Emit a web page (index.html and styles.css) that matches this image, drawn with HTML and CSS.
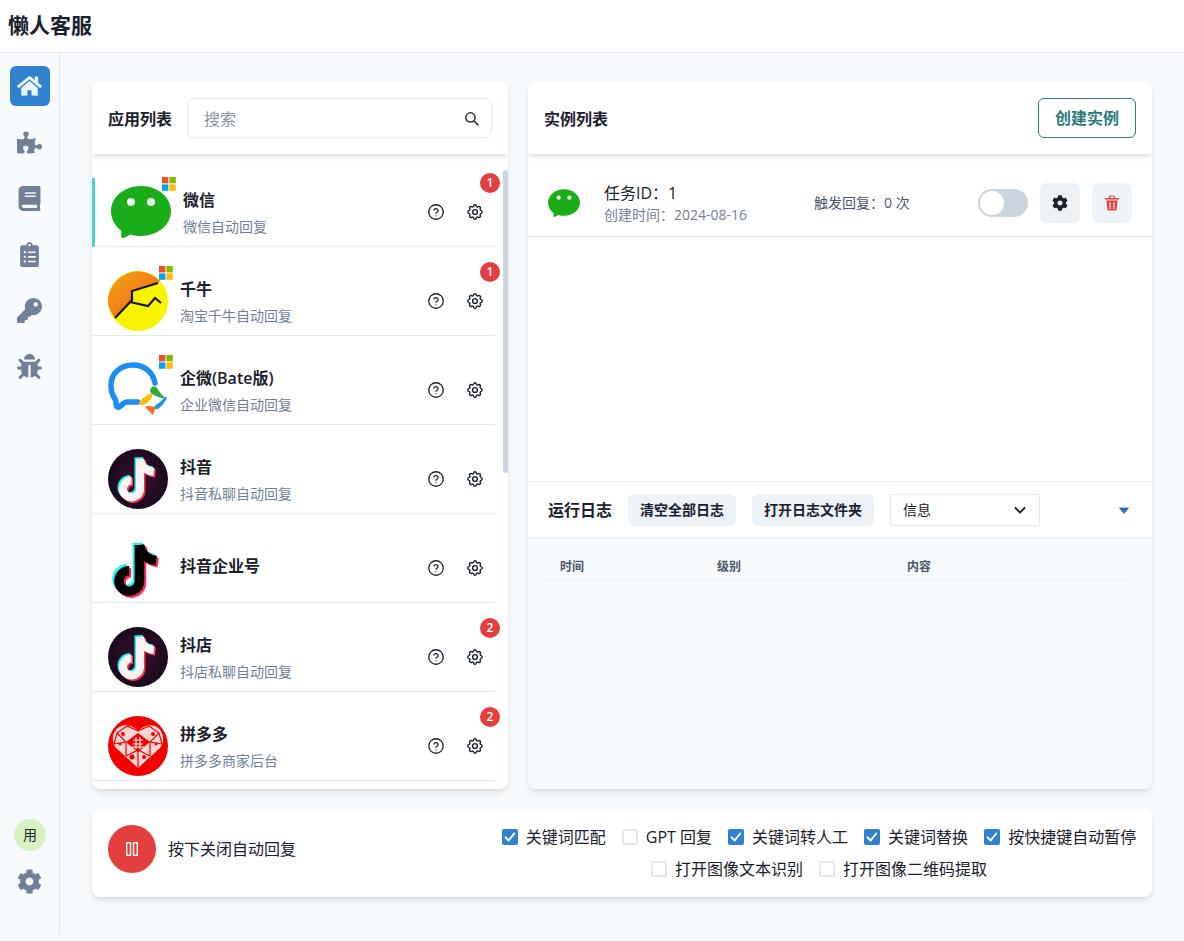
FILE: index.html
```html
<!DOCTYPE html>
<html lang="zh-CN">
<head>
<meta charset="utf-8">
<title>懒人客服</title>
<link rel="stylesheet" href="styles.css">
</head>
<body>
<svg class="defs" width="0" height="0" aria-hidden="true">
  <defs>
    <symbol id="i-home" viewBox="0 0 576 512"><path d="M280.37 148.26L96 300.11V464a16 16 0 0 0 16 16l112.06-.29a16 16 0 0 0 15.92-16V368a16 16 0 0 1 16-16h64a16 16 0 0 1 16 16v95.64a16 16 0 0 0 16 16.05L464 480a16 16 0 0 0 16-16V300L295.67 148.26a12.19 12.19 0 0 0-15.3 0zM571.6 251.47L488 182.56V44.05a12 12 0 0 0-12-12h-56a12 12 0 0 0-12 12v72.61L318.47 43a48 48 0 0 0-61 0L4.34 251.47a12 12 0 0 0-1.6 16.9l25.5 31A12 12 0 0 0 45.15 301l235.22-193.74a12.19 12.19 0 0 1 15.3 0L530.9 301a12 12 0 0 0 16.9-1.6l25.5-31a12 12 0 0 0-1.7-16.93z"/></symbol>
    <symbol id="i-puzzle" viewBox="0 0 576 512"><path d="M519.442 288.651c-41.519 0-59.5 31.593-82.058 31.593C377.409 320.244 432 144 432 144s-196.288 80-196.288-3.297c0-35.827 36.288-46.25 36.288-85.985C272 19.216 243.885 0 210.539 0c-34.654 0-66.366 18.891-66.366 56.346 0 41.364 31.711 59.277 31.711 81.75C175.885 207.719 0 166.758 0 166.758v333.237s178.635 41.047 178.635-28.662c0-22.473-40-40.107-40-81.471 0-37.456 29.25-56.346 63.577-56.346 33.673 0 61.788 19.216 61.788 54.717 0 39.735-36.288 50.158-36.288 85.985 0 60.803 129.675 25.73 181.23 25.73 0 0-34.725-120.101 25.827-120.101 35.962 0 46.423 36.152 86.308 36.152C556.712 416 576 387.99 576 354.443c0-34.199-18.962-65.792-56.558-65.792z"/></symbol>
    <symbol id="i-book" viewBox="0 0 448 512"><path d="M448 360V24c0-13.3-10.7-24-24-24H96C43 0 0 43 0 96v320c0 53 43 96 96 96h328c13.3 0 24-10.7 24-24v-16c0-7.5-3.5-14.3-8.9-18.7-4.2-15.4-4.2-59.3 0-74.7 5.4-4.3 8.9-11.1 8.9-18.6zM128 134c0-3.3 2.7-6 6-6h212c3.3 0 6 2.7 6 6v20c0 3.3-2.7 6-6 6H134c-3.3 0-6-2.7-6-6v-20zm0 64c0-3.3 2.7-6 6-6h212c3.3 0 6 2.7 6 6v20c0 3.3-2.7 6-6 6H134c-3.3 0-6-2.7-6-6v-20zm253.4 250H96c-17.7 0-32-14.3-32-32 0-17.6 14.4-32 32-32h285.4c-1.9 17.1-1.9 46.9 0 64z"/></symbol>
    <symbol id="i-clip" viewBox="0 0 384 512"><path d="M336 64h-80c0-35.3-28.7-64-64-64s-64 28.7-64 64H48C21.5 64 0 85.5 0 112v352c0 26.5 21.5 48 48 48h288c26.5 0 48-21.5 48-48V112c0-26.5-21.5-48-48-48zM96 424c-13.3 0-24-10.7-24-24s10.7-24 24-24 24 10.7 24 24-10.7 24-24 24zm0-96c-13.3 0-24-10.7-24-24s10.7-24 24-24 24 10.7 24 24-10.7 24-24 24zm0-96c-13.3 0-24-10.7-24-24s10.7-24 24-24 24 10.7 24 24-10.7 24-24 24zm96-192c13.3 0 24 10.7 24 24s-10.7 24-24 24-24-10.7-24-24 10.7-24 24-24zm128 368c0 4.4-3.6 8-8 8H168c-4.4 0-8-3.6-8-8v-16c0-4.4 3.6-8 8-8h144c4.4 0 8 3.6 8 8v16zm0-96c0 4.4-3.6 8-8 8H168c-4.4 0-8-3.6-8-8v-16c0-4.4 3.6-8 8-8h144c4.4 0 8 3.6 8 8v16zm0-96c0 4.4-3.6 8-8 8H168c-4.4 0-8-3.6-8-8v-16c0-4.4 3.6-8 8-8h144c4.4 0 8 3.6 8 8v16z"/></symbol>
    <symbol id="i-key" viewBox="0 0 512 512"><path d="M512 176.001C512 273.203 433.202 352 336 352c-11.22 0-22.19-1.062-32.827-3.069l-24.012 27.014A23.999 23.999 0 0 1 261.223 384H224v40c0 13.255-10.745 24-24 24h-40v40c0 13.255-10.745 24-24 24H24c-13.255 0-24-10.745-24-24v-78.059c0-6.365 2.529-12.47 7.029-16.971l161.802-161.802C163.108 213.814 160 195.271 160 176 160 78.798 238.797.001 335.999 0 433.488-.001 512 78.511 512 176.001zM336 128c0 26.51 21.49 48 48 48s48-21.49 48-48-21.49-48-48-48-48 21.49-48 48z"/></symbol>
    <symbol id="i-bug" viewBox="0 0 512 512"><path d="M511.988 288.9c-.478 17.43-15.217 31.1-32.653 31.1H424v16c0 21.864-4.882 42.584-13.6 61.145l60.228 60.228c12.496 12.497 12.496 32.758 0 45.255-12.498 12.497-32.759 12.496-45.256 0l-54.736-54.736C345.886 467.965 314.351 480 280 480V236c0-6.627-5.373-12-12-12h-24c-6.627 0-12 5.373-12 12v244c-34.351 0-65.886-12.035-90.636-32.108l-54.736 54.736c-12.498 12.497-32.759 12.496-45.256 0-12.496-12.497-12.496-32.758 0-45.255l60.228-60.228C92.882 378.584 88 357.864 88 336v-16H32.666C15.23 320 .491 306.33.013 288.9-.484 270.816 14.028 256 32 256h56v-58.745l-46.628-46.628c-12.496-12.497-12.496-32.758 0-45.255 12.498-12.497 32.758-12.497 45.256 0L141.255 160h229.489l54.627-54.627c12.498-12.497 32.758-12.497 45.256 0 12.496 12.497 12.496 32.758 0 45.255L424 197.255V256h55.989c17.972 0 32.484 14.816 31.999 32.9zM257 0c-61.856 0-112 50.144-112 112h224C369 50.144 318.856 0 257 0z"/></symbol>
    <symbol id="i-cog" viewBox="0 0 512 512"><path d="M487.4 315.7l-42.6-24.6c4.3-23.2 4.3-47 0-70.2l42.6-24.6c4.9-2.8 7.1-8.6 5.5-14-11.1-35.6-30-67.8-54.7-94.6-3.8-4.1-10-5.1-14.8-2.3L380.8 110c-17.9-15.4-38.5-27.3-60.8-35.1V25.8c0-5.6-3.9-10.5-9.4-11.7-36.7-8.2-74.3-7.8-109.2 0-5.5 1.2-9.4 6.1-9.4 11.7V75c-22.2 7.9-42.8 19.8-60.8 35.1L88.7 85.5c-4.9-2.8-11-1.9-14.8 2.3-24.7 26.7-43.6 58.9-54.7 94.6-1.7 5.4.6 11.2 5.5 14L67.3 221c-4.3 23.2-4.3 47 0 70.2l-42.6 24.6c-4.9 2.8-7.1 8.6-5.5 14 11.1 35.6 30 67.8 54.7 94.6 3.8 4.1 10 5.1 14.8 2.3l42.6-24.6c17.9 15.4 38.5 27.3 60.8 35.1v49.2c0 5.6 3.9 10.5 9.4 11.7 36.7 8.2 74.3 7.8 109.2 0 5.5-1.2 9.4-6.1 9.4-11.7v-49.2c22.2-7.9 42.8-19.8 60.8-35.1l42.6 24.6c4.9 2.8 11 1.9 14.8-2.3 24.7-26.7 43.6-58.9 54.7-94.6 1.5-5.5-.7-11.3-5.6-14.1zM256 336c-44.1 0-80-35.9-80-80s35.9-80 80-80 80 35.9 80 80-35.9 80-80 80z"/></symbol>
    <symbol id="i-gear-line" viewBox="2 2 20 20"><g fill="none" stroke="currentColor" stroke-width="1.800" stroke-linecap="round" stroke-linejoin="round"><path d="M10.325 4.317c.426-1.756 2.924-1.756 3.35 0a1.724 1.724 0 0 0 2.573 1.066c1.543-.94 3.31.826 2.37 2.37a1.724 1.724 0 0 0 1.065 2.572c1.756.426 1.756 2.924 0 3.35a1.724 1.724 0 0 0-1.066 2.573c.94 1.543-.826 3.31-2.37 2.37a1.724 1.724 0 0 0-2.572 1.065c-.426 1.756-2.924 1.756-3.35 0a1.724 1.724 0 0 0-2.573-1.066c-1.543.94-3.31-.826-2.37-2.37a1.724 1.724 0 0 0-1.065-2.572c-1.756-.426-1.756-2.924 0-3.35a1.724 1.724 0 0 0 1.066-2.573c-.94-1.543.826-3.31 2.37-2.37.996.608 2.296.07 2.572-1.065z"/><circle cx="12" cy="12" r="3"/></g></symbol>
    <symbol id="i-help" viewBox="1 1 22 22"><g fill="none" stroke="currentColor" stroke-width="1.800" stroke-linecap="round" stroke-linejoin="round"><circle cx="12" cy="12" r="10"/><path d="M9.100 9.200a3 3 0 0 1 5.800 1c0 2-2.900 2.300-2.900 3.600"/><path d="M12 17.200h.01"/></g></symbol>
    <symbol id="i-check" viewBox="0 0 16 16"><path d="M3.600 8.400l3 3.100 5.600-7" fill="none" stroke="#fff" stroke-width="2" stroke-linecap="round" stroke-linejoin="round"/></symbol>
    <symbol id="i-win" viewBox="0 0 14 14"><rect width="6.400" height="6.400" fill="#f25022"/><rect x="7.400" width="6.400" height="6.400" fill="#7fba00"/><rect y="7.400" width="6.400" height="6.400" fill="#00a4ef"/><rect x="7.400" y="7.400" width="6.400" height="6.400" fill="#ffb900"/></symbol>
    <symbol id="i-wechat" viewBox="0 0 60 60"><path d="M30 4c16.600 0 30 11.200 30 25s-13.400 25-30 25c-3.700 0-7.200-.6-10.500-1.600L13 55.800c-1.500.7-2.900-.2-2.800-1.800l.2-5.300C4 44.200 0 37 0 29 0 15.200 13.400 4 30 4z" fill="#1aad19"/><circle cx="20" cy="20" r="4" fill="#fff" fill-opacity=".9"/><circle cx="40" cy="20" r="4" fill="#fff" fill-opacity=".9"/></symbol>
    <symbol id="i-note" viewBox="0 0 60 60"><g fill="none" stroke-width="8"><path d="M32 10v30a8.500 8.500 0 1 1-8.500-8.500"/><path d="M32 10c1 7 6 12 14 13"/></g></symbol>
    <radialGradient id="g-dark"><stop offset="0" stop-color="#3a1030"/><stop offset="1" stop-color="#1b0a1e"/></radialGradient>
    <linearGradient id="g-qn" x1="0" y1="0" x2="1" y2="1"><stop offset="0" stop-color="#f5a50a"/><stop offset=".6" stop-color="#f27a1c"/></linearGradient>
    <symbol id="i-douyin-round" viewBox="0 0 60 60"><circle cx="30" cy="30" r="30" fill="url(#g-dark)"/><use href="#i-note" width="60" height="60" x="-1.500" y="-1.500" stroke="#25f4ee"/><use href="#i-note" width="60" height="60" x="1.500" y="1.500" stroke="#fe2c55"/><use href="#i-note" width="60" height="60" stroke="#fdf3f3"/></symbol>
  </defs>
</svg>

<header class="topbar"><h1 class="brand">懒人客服</h1></header>

<div class="shell">
  <nav class="sidebar">
    <div class="nav-top">
      <a class="nav-item active"><svg class="ic-home"><use href="#i-home"/></svg></a>
      <a class="nav-item"><svg class="ic-nav"><use href="#i-puzzle"/></svg></a>
      <a class="nav-item"><svg class="ic-nav"><use href="#i-book"/></svg></a>
      <a class="nav-item"><svg class="ic-nav"><use href="#i-clip"/></svg></a>
      <a class="nav-item"><svg class="ic-nav"><use href="#i-key"/></svg></a>
      <a class="nav-item"><svg class="ic-nav"><use href="#i-bug"/></svg></a>
    </div>
    <div class="nav-bottom">
      <span class="avatar">用</span>
      <svg class="ic-nav ic-settings"><use href="#i-cog"/></svg>
    </div>
  </nav>

  <main class="main">
    <div class="columns">
      <section class="panel panel-apps">
        <div class="panel-head">
          <h2 class="panel-title">应用列表</h2>
          <label class="search">
            <span class="search-ph">搜索</span>
            <svg class="ic-search" viewBox="0 0 24 24"><circle cx="10.500" cy="10.500" r="6.500" fill="none" stroke="currentColor" stroke-width="2.200"/><path d="M15.500 15.500L21 21" stroke="currentColor" stroke-width="2.400" stroke-linecap="round"/></svg>
          </label>
        </div>
        <div class="app-list">
          <div class="app">
            <div class="app-row active">
              <div class="app-icon">
                <svg class="logo"><use href="#i-wechat"/></svg>
                <svg class="win"><use href="#i-win"/></svg>
              </div>
              <div class="app-text"><div class="app-name">微信</div><div class="app-sub">微信自动回复</div></div>
              <div class="app-actions"><svg class="ic-act"><use href="#i-help"/></svg><svg class="ic-act"><use href="#i-gear-line"/></svg></div>
              <span class="badge">1</span>
            </div>
          </div>
          <div class="app">
            <div class="app-row">
              <div class="app-icon">
                <svg class="logo" viewBox="0 0 60 60"><circle cx="30" cy="30" r="30" fill="#f8f400"/><path d="M0 30A30 30 0 0 1 52 10L50 12 24 20V29L7 47A30 30 0 0 1 0 30z" fill="url(#g-qn)"/><path d="M7 47L24 29V20L50 12M22 31L40 35 47 27 53 32" fill="none" stroke="#1a1300" stroke-width="2.200"/></svg>
                <svg class="win"><use href="#i-win"/></svg>
              </div>
              <div class="app-text"><div class="app-name">千牛</div><div class="app-sub">淘宝千牛自动回复</div></div>
              <div class="app-actions"><svg class="ic-act"><use href="#i-help"/></svg><svg class="ic-act"><use href="#i-gear-line"/></svg></div>
              <span class="badge">1</span>
            </div>
          </div>
          <div class="app">
            <div class="app-row">
              <div class="app-icon">
                <svg class="logo" viewBox="0 0 60 60"><path d="M30 42H19c-3 0-5 3-8 5-2 1-3-1-3-3 0-2 0-4-1-5C4 35 3 30 3 25 3 13 13 5 25 5c11 0 20 7 22 18" fill="none" stroke="#1b8df2" stroke-width="5.500" stroke-linecap="round"/><path d="M42 30a4 4 0 0 1 7-2c2 3 4 6 7 9 1 1-1 2-2 1-3-1-7-2-10-4a4 4 0 0 1-2-4z" fill="#2eab3a"/><path d="M44 33c-4 1-8 4-12 8-2 2 0 5 3 4 3-1 6-3 8-6 1-2 2-4 1-6z" fill="#fcbd0d"/><path d="M39 46c3 0 7 0 9 1l-3 8c-3-2-5-5-7-7-1-1 0-2 1-2z" fill="#f5742a"/><path d="M59 38c-2 4-5 8-9 11-2 1-4-2-3-3 1-2 3-2 5-4 2-2 3-3 5-5 1 0 2 0 2 1z" fill="#1b8df2"/></svg>
                <svg class="win"><use href="#i-win"/></svg>
              </div>
              <div class="app-text"><div class="app-name">企微(Bate版)</div><div class="app-sub">企业微信自动回复</div></div>
              <div class="app-actions"><svg class="ic-act"><use href="#i-help"/></svg><svg class="ic-act"><use href="#i-gear-line"/></svg></div>
            </div>
          </div>
          <div class="app">
            <div class="app-row">
              <div class="app-icon"><svg class="logo"><use href="#i-douyin-round"/></svg></div>
              <div class="app-text"><div class="app-name">抖音</div><div class="app-sub">抖音私聊自动回复</div></div>
              <div class="app-actions"><svg class="ic-act"><use href="#i-help"/></svg><svg class="ic-act"><use href="#i-gear-line"/></svg></div>
            </div>
          </div>
          <div class="app">
            <div class="app-row">
              <div class="app-icon">
                <svg class="logo" viewBox="0 0 60 60"><use href="#i-note" width="72" height="72" x="-9" y="-7" stroke="#25f4ee"/><use href="#i-note" width="72" height="72" x="-5" y="-3" stroke="#fe2c55"/><use href="#i-note" width="72" height="72" x="-7" y="-5" stroke="#000"/></svg>
              </div>
              <div class="app-text"><div class="app-name up">抖音企业号</div></div>
              <div class="app-actions"><svg class="ic-act"><use href="#i-help"/></svg><svg class="ic-act"><use href="#i-gear-line"/></svg></div>
            </div>
          </div>
          <div class="app">
            <div class="app-row">
              <div class="app-icon"><svg class="logo"><use href="#i-douyin-round"/></svg></div>
              <div class="app-text"><div class="app-name">抖店</div><div class="app-sub">抖店私聊自动回复</div></div>
              <div class="app-actions"><svg class="ic-act"><use href="#i-help"/></svg><svg class="ic-act"><use href="#i-gear-line"/></svg></div>
              <span class="badge">2</span>
            </div>
          </div>
          <div class="app">
            <div class="app-row">
              <div class="app-icon">
                <svg class="logo" viewBox="0 0 60 60"><circle cx="30" cy="30" r="30" fill="#f40000"/><path d="M30 52L8 32C2 25 5 13 13 10c6-2 12 0 17 5 5-5 11-7 17-5 8 3 11 15 5 22z" fill="#fcd5d5"/><path d="M30 15L19 10 9 17 6 28M30 15L41 10 51 17 54 28M9 17L18 26M51 17L42 26M18 26V40M42 26V40M18 40L30 34 42 40M30 34V52M6 28L18 26M54 28L42 26" fill="none" stroke="#f40000" stroke-width="1.200"/><path d="M30 17l12 9-12 10-12-10z" fill="#f40000"/><path d="M25 24h10M25 28h10M24 31h12M28 21v12M32 21v12" stroke="#fff" stroke-width="1.100" fill="none"/><circle cx="15" cy="18" r="2" fill="#f40000"/><circle cx="45" cy="18" r="2" fill="#f40000"/><circle cx="12" cy="28" r="1.500" fill="#f40000"/><circle cx="48" cy="28" r="1.500" fill="#f40000"/><circle cx="24" cy="41" r="2.500" fill="#f40000"/><circle cx="36" cy="41" r="2" fill="#f40000"/></svg>
              </div>
              <div class="app-text"><div class="app-name">拼多多</div><div class="app-sub">拼多多商家后台</div></div>
              <div class="app-actions"><svg class="ic-act"><use href="#i-help"/></svg><svg class="ic-act"><use href="#i-gear-line"/></svg></div>
              <span class="badge">2</span>
            </div>
          </div>
        </div>
        <span class="scroll-thumb"></span>
      </section>

      <section class="panel panel-right">
        <div class="panel-head spread">
          <h2 class="panel-title">实例列表</h2>
          <button class="btn-outline">创建实例</button>
        </div>
        <div class="instances">
          <div class="instance">
            <svg class="inst-logo"><use href="#i-wechat"/></svg>
            <div class="inst-info">
              <div class="inst-id">任务ID：1</div>
              <div class="inst-date">创建时间：2024-08-16</div>
            </div>
            <div class="inst-count">触发回复：0 次</div>
            <span class="switch"><span class="knob"></span></span>
            <button class="btn-square"><svg class="ic-btn"><use href="#i-cog"/></svg></button>
            <button class="btn-square"><svg class="ic-trash" viewBox="0 0 16 16"><path d="M5.500 3V2a1 1 0 0 1 1-1h3a1 1 0 0 1 1 1v1" fill="none" stroke="#e53e3e" stroke-width="1.200"/><rect x=".8" y="3" width="14.400" height="1.600" rx=".6" fill="#e53e3e"/><path d="M2.500 5.500h11l-.8 8.700a1.500 1.500 0 0 1-1.500 1.300H4.800a1.500 1.500 0 0 1-1.500-1.300z" fill="#e53e3e"/><path d="M6 7.500v6M10 7.500v6" stroke="#edf2f7" stroke-width="1.200" stroke-linecap="round"/></svg></button>
          </div>
        </div>
        <div class="log">
          <div class="log-head">
            <span class="log-title">运行日志</span>
            <button class="btn-soft">清空全部日志</button>
            <button class="btn-soft">打开日志文件夹</button>
            <div class="select"><span>信息</span><svg class="ic-chev" viewBox="0 0 16 16"><path d="M3.500 6l4.500 4.500L12.500 6" fill="none" stroke="currentColor" stroke-width="1.800" stroke-linecap="round" stroke-linejoin="round"/></svg></div>
            <svg class="ic-caret" viewBox="0 0 12 8"><path d="M.5 1h11L6 7.500z" fill="#2b6cb0" stroke="#2b6cb0" stroke-linejoin="round"/></svg>
          </div>
          <div class="log-body">
            <div class="log-cols">
              <span class="col-time">时间</span>
              <span class="col-level">级别</span>
              <span class="col-content">内容</span>
            </div>
          </div>
        </div>
      </section>
    </div>

    <section class="panel footer-bar">
      <div class="pause-wrap">
        <button class="pause"><svg class="ic-pause" viewBox="0 0 12 14"><rect x=".7" y=".7" width="3.800" height="12.600" fill="none" stroke="#fff" stroke-width="1.400"/><rect x="7.500" y=".7" width="3.800" height="12.600" fill="none" stroke="#fff" stroke-width="1.400"/></svg></button>
        <span class="pause-label">按下关闭自动回复</span>
      </div>
      <div class="options">
        <label class="opt"><span class="cb on"><svg><use href="#i-check"/></svg></span>关键词匹配</label>
        <label class="opt"><span class="cb"></span>GPT 回复</label>
        <label class="opt"><span class="cb on"><svg><use href="#i-check"/></svg></span>关键词转人工</label>
        <label class="opt"><span class="cb on"><svg><use href="#i-check"/></svg></span>关键词替换</label>
        <label class="opt"><span class="cb on"><svg><use href="#i-check"/></svg></span>按快捷键自动暂停</label>
        <label class="opt"><span class="cb"></span>打开图像文本识别</label>
        <label class="opt"><span class="cb"></span>打开图像二维码提取</label>
      </div>
    </section>
  </main>
</div>
</body>
</html>
```

FILE: styles.css
```css
* { box-sizing: border-box; }
html, body { margin: 0; height: 941px; overflow: hidden; }
body {
  background: #f7fafc;
  color: #1a202c;
  font-family: "Open Sans", "Noto Sans CJK SC", sans-serif;
  font-size: 16px;
  line-height: 24px;
}
h1, h2 { margin: 0; }
button { font: inherit; cursor: pointer; border: 0; background: none; padding: 0; color: inherit; }
.defs { position: absolute; }

.topbar {
  height: 53px;
  background: #fff;
  border-bottom: 1px solid #e2e8f0;
  padding: 11px 8px 0;
}
.brand { font-size: 21px; line-height: 28px; font-weight: 700; }

.shell { display: flex; height: 888px; }
.sidebar {
  width: 60px;
  height: 882px;
  border-right: 1px solid #e2e8f0;
  padding: 13px 9px 41px 10px;
  display: flex;
  flex-direction: column;
  justify-content: space-between;
}
.nav-top { display: flex; flex-direction: column; gap: 16px; }
.nav-item { width: 40px; height: 40px; padding-right: 1px; display: flex; align-items: center; justify-content: center; border-radius: 6px; fill: #718096; }
.nav-item.active { background: #3182ce; fill: #ebf8ff; }
.ic-home { width: 25px; height: 22px; }
.ic-nav { width: 25px; height: 25px; fill: #718096; }
.nav-bottom { display: flex; flex-direction: column; align-items: center; gap: 18px; }
.ic-settings { margin-left: -1px; }
.avatar { width: 32px; height: 32px; border-radius: 50%; background: #d6f2c2; display: flex; align-items: center; justify-content: center; font-size: 14px; }

.main { flex: 1; padding: 29px 32px 0; display: flex; flex-direction: column; gap: 20px; }
.columns { display: flex; gap: 20px; height: 707px; }
.panel { background: #fff; border-radius: 8px; box-shadow: 0 4px 6px -1px rgba(0,0,0,.1), 0 2px 4px -1px rgba(0,0,0,.06); }
.panel-apps { width: 416px; position: relative; overflow: hidden; display: flex; flex-direction: column; }
.panel-right { width: 624px; overflow: hidden; display: flex; flex-direction: column; }
.panel-head {
  position: relative;
  flex: none;
  height: 72px;
  display: flex;
  align-items: center;
  gap: 15px;
  padding: 0 16px;
  background: #fff;
  box-shadow: 0 4px 6px -1px rgba(0,0,0,.1), 0 2px 4px -1px rgba(0,0,0,.06);
}
.panel-head.spread { justify-content: space-between; }
.panel-title { font-size: 16px; line-height: 24px; font-weight: 600; padding-top: 2px; }
.search {
  flex: 1;
  height: 40px;
  border: 1px solid #e2e8f0;
  border-radius: 6px;
  display: flex;
  align-items: center;
  justify-content: space-between;
  padding: 0 11px 0 16px;
}
.search-ph { color: #8a94a6; padding-top: 2px; }
.ic-search { width: 17px; height: 17px; color: #2d3748; }

.app-list { flex: 1; padding-top: 4px; overflow: hidden; }
.app { padding: 20px 13px 0 0; }
.app-row {
  position: relative;
  height: 69px;
  border-bottom: 1px solid #e2e8f0;
  padding: 4px 0 4px 16px;
  display: flex;
  gap: 12px;
}
.app-row.active { border-left: 3px solid #4fd1c5; }
.app-icon { position: relative; width: 60px; height: 60px; flex: none; }
.logo { width: 60px; height: 60px; display: block; }
.win { position: absolute; top: -5px; right: -5px; width: 14px; height: 14px; }
.app-text { flex: 1; padding-top: 6px; }
.app-name { font-size: 16px; line-height: 24px; font-weight: 600; }
.app-name.up { padding-top: 10px; }
.app-sub { font-size: 14px; line-height: 20px; margin-top: 5px; color: #718096; }
.app-actions { display: flex; gap: 23px; padding: 22px 12px 0 0; height: 40px; color: #1a202c; }
.ic-act { width: 16px; height: 16px; }
.badge {
  position: absolute;
  right: -5px;
  top: -5px;
  width: 20px;
  height: 20px;
  border-radius: 50%;
  background: #e53e3e;
  color: #fff;
  font-size: 12px;
  line-height: 20px;
  text-align: center;
  font-weight: 600;
}
.scroll-thumb { position: absolute; right: 0; top: 88px; width: 5px; height: 303px; border-radius: 3px; background: #cbd5e0; }

.btn-outline {
  height: 40px;
  padding: 0 16px;
  border: 1px solid #2c7a7b;
  border-radius: 6px;
  color: #2c7a7b;
  font-weight: 600;
}
.instances { flex: 1; }
.instance {
  height: 83px;
  border-bottom: 1px solid #e2e8f0;
  padding: 16px 20px 0;
  display: flex;
  align-items: center;
}
.inst-logo { width: 32px; height: 32px; flex: none; margin-right: 24px; margin-top: -1px; }
.inst-info { width: 210px; flex: none; }
.inst-id { font-size: 16px; line-height: 24px; }
.inst-date { font-size: 14px; line-height: 20px; color: #718096; }
.inst-count { font-size: 14px; color: #4a5568; flex: 1; }
.switch { width: 50px; height: 28px; border-radius: 14px; background: #cbd5e0; padding: 2px; margin-right: 12px; flex: none; }
.knob { display: block; width: 24px; height: 24px; border-radius: 50%; background: #fff; }
.btn-square { width: 40px; height: 40px; border-radius: 6px; background: #edf2f7; display: flex; align-items: center; justify-content: center; flex: none; }
.btn-square + .btn-square { margin-left: 12px; }
.ic-btn { width: 16px; height: 16px; fill: #1a202c; }
.ic-trash { width: 16px; height: 16px; }

.log { height: 308px; flex: none; border-top: 1px solid #edf2f7; display: flex; flex-direction: column; }
.log-head {
  height: 57px;
  flex: none;
  border-bottom: 1px solid #e2e8f0;
  padding: 0 20px;
  display: flex;
  align-items: center;
}
.log-title { font-weight: 600; margin-right: 16px; }
.btn-soft { height: 32px; padding: 0 12px; border-radius: 6px; background: #edf2f7; font-size: 14px; font-weight: 600; margin-right: 16px; }
.select {
  width: 150px;
  height: 32px;
  border: 1px solid #e2e8f0;
  border-radius: 2px;
  padding: 0 11px 0 12px;
  display: flex;
  align-items: center;
  justify-content: space-between;
  font-size: 14px;
}
.ic-chev { width: 16px; height: 16px; }
.ic-caret { width: 10px; height: 7px; margin-left: auto; margin-right: 3px; }
.log-body { flex: 1; background: #f7fafc; padding: 16px 20px 0 16px; }
.log-cols {
  display: flex;
  height: 25px;
  border-bottom: 1px solid #edf2f7;
  font-size: 12px;
  line-height: 24px;
  font-weight: 600;
  color: #4a5568;
}
.col-time { width: 173px; padding-left: 16px; }
.col-level { width: 190px; }
.col-content { flex: 1; }

.footer-bar { height: 88px; display: flex; align-items: flex-start; justify-content: space-between; padding: 16px; }
.pause-wrap { display: flex; align-items: center; gap: 12px; }
.pause { width: 48px; height: 48px; border-radius: 50%; background: #e53e3e; display: flex; align-items: center; justify-content: center; }
.ic-pause { width: 12px; height: 14px; }
.options { width: 640px; margin-right: -3px; display: flex; flex-wrap: wrap; justify-content: center; gap: 8px 16px; }
.opt { display: flex; align-items: center; gap: 8px; height: 24px; }
.cb { width: 16px; height: 16px; border: 2px solid #e2e8f0; border-radius: 2px; display: block; flex: none; }
.cb.on { background: #3182ce; border: 0; }
.cb svg { width: 16px; height: 16px; display: block; }
```
